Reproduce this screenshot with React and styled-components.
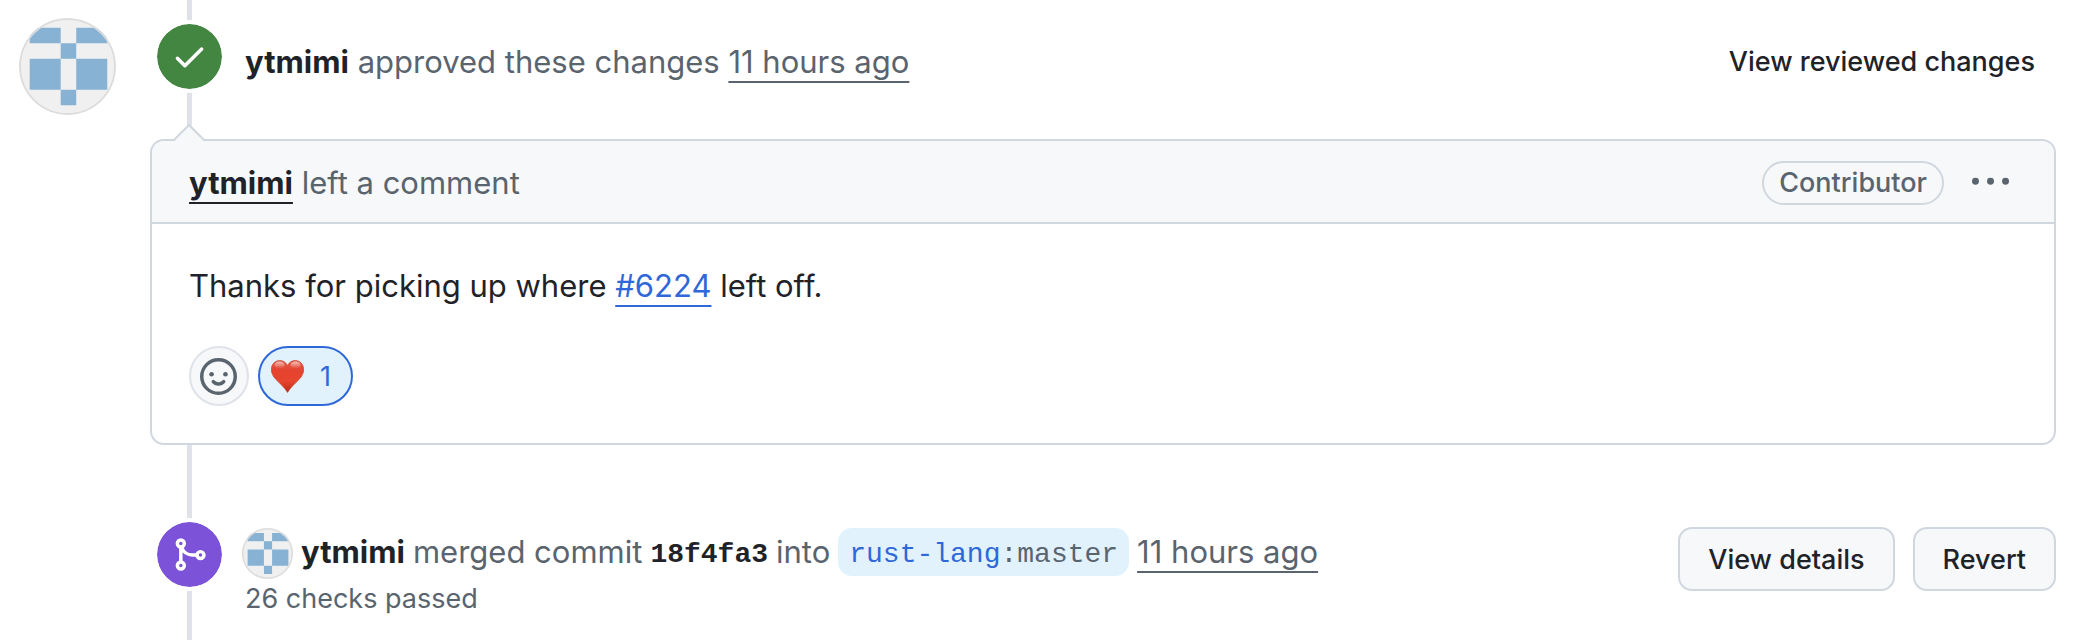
import React from "react";
import styled, { createGlobalStyle, css } from "styled-components";

const color = {
  ink: "#1f2328",
  muted: "#5a646e",
  border: "#d1d7df",
  line: "#dfe3e9",
  subtle: "#f6f8fa",
  accent: "#2f68d8",
  accentSoft: "#e1f2fd",
};

const GlobalStyle = createGlobalStyle`
  *, *::before, *::after { box-sizing: border-box; }
  body {
    margin: 0;
    background: #fff;
    color: ${color.ink};
    font-family: Inter, "Liberation Sans", sans-serif;
    font-size: 31px;
    line-height: 48px;
  }
  button { font-family: inherit; cursor: pointer; }
`;

const Page = styled.main`
  display: flex;
  gap: 34px;
  min-height: 100vh;
  padding: 0 26px 0 19px;
`;

const AvatarLink = styled.a`
  flex: none;
  height: ${(p) => p.$size}px;
  margin-top: ${(p) => (p.$gutter ? 18 : 0)}px;
`;

const AvatarSvg = styled.svg`
  display: block;
  border-radius: 50%;
`;

/* The vertical rail is painted behind every entry. */
const Timeline = styled.div`
  flex: 1;
  min-width: 0;
  background: linear-gradient(${color.line}, ${color.line}) 37px 0 / 5px 100% no-repeat;
`;

const Entry = styled.section`
  display: flex;
  align-items: flex-start;
  gap: 16px;
  padding: ${(p) => p.$padding};
`;

const Badge = styled.span`
  display: flex;
  flex: none;
  align-items: center;
  justify-content: center;
  width: 73px;
  height: 73px;
  border: 4px solid #fff;
  border-radius: 50%;
  background: ${(p) => p.$color} padding-box;
  color: #fff;
`;

const EntryBody = styled.div`
  flex: 1;
  min-width: 0;
  color: ${color.muted};
  padding-top: ${(p) => p.$top}px;
`;

const Summary = styled.div`
  padding: 0 3px;
`;

const Line = styled.div`
  display: flex;
  align-items: flex-start;
  flex-wrap: wrap;
  gap: 8px;
`;

const linkLine = css`
  text-decoration: underline;
  text-decoration-thickness: 2px;
  text-decoration-skip-ink: none;
  text-underline-offset: 8px;
`;

const Author = styled.a`
  color: ${color.ink};
  font-weight: 700;
  text-decoration: none;
  ${(p) => p.$underlined && linkLine}
`;

const TimeLink = styled.a`
  color: ${color.muted};
  ${linkLine}
`;

const IssueLink = styled.a`
  color: ${color.accent};
  ${linkLine}
`;

const Mono = styled.a`
  padding-top: 5px;
  color: ${color.ink};
  font-family: "Liberation Mono", monospace;
  font-size: 28px;
  font-weight: 700;
  line-height: 43px;
  text-decoration: none;
`;

const Branch = styled(Mono)`
  padding: 5px 11px 0;
  border-radius: 14px;
  background: ${color.accentSoft};
  color: ${color.muted};
  font-weight: 400;
`;

const BranchOwner = styled.span`
  color: ${color.accent};
`;

const Checks = styled(Summary)`
  font-size: 27px;
  line-height: 40px;
`;

const PlainButton = styled.button`
  padding: 0 21px;
  border: 0;
  background: none;
  color: ${color.ink};
  font-size: 27px;
  font-weight: 500;
  line-height: 60px;
  margin-top: 12px;
`;

const Actions = styled.div`
  display: flex;
  gap: 18px;
  margin-top: 9px;
`;

const Button = styled.button`
  height: 64px;
  padding: 0 28px;
  border: 2px solid ${color.border};
  border-radius: 14px;
  background: ${color.subtle};
  color: ${color.ink};
  font-size: 27px;
  font-weight: 500;
`;

const Card = styled.article`
  border: 2px solid ${color.border};
  border-radius: 14px;
  background: #fff;
`;

const CardHeader = styled.header`
  position: relative;
  display: flex;
  align-items: center;
  justify-content: space-between;
  height: 83px;
  padding: 3px 45px 0 37px;
  border-bottom: 2px solid ${color.border};
  border-radius: 12px 12px 0 0;
  background: ${color.subtle};
  color: ${color.muted};
`;

const Caret = styled.svg`
  position: absolute;
  left: 18px;
  top: -18px;
`;

const HeaderTools = styled.div`
  display: flex;
  align-items: center;
  gap: 28px;
`;

const Role = styled.span`
  height: 44px;
  padding: 0 15px;
  border: 2px solid ${color.border};
  border-radius: 22px;
  font-size: 27px;
  font-weight: 500;
  line-height: 40px;
`;

const IconButton = styled.button`
  display: flex;
  padding: 0;
  border: 0;
  background: none;
  color: ${color.muted};
`;

const CardBody = styled.div`
  padding: 38px 37px 37px;
`;

const Text = styled.p`
  margin: 0 0 36px;
`;

const Reactions = styled.div`
  display: flex;
  gap: 9px;
`;

const Reaction = styled.button`
  display: flex;
  align-items: center;
  gap: 16px;
  height: 60px;
  width: ${(p) => (p.$active ? 95 : 60)}px;
  padding: 0 0 0 ${(p) => (p.$active ? 11 : 9)}px;
  border: 2px solid ${(p) => (p.$active ? color.accent : color.line)};
  border-radius: 30px;
  background: ${(p) => (p.$active ? color.accentSoft : color.subtle)};
  color: ${(p) => (p.$active ? color.accent : color.muted)};
  font-size: 27px;
`;

function Avatar({ size, gutter }) {
  return (
    <AvatarLink href="#ytmimi" aria-label="ytmimi" $size={size} $gutter={gutter}>
      <AvatarSvg width={size} height={size} viewBox="0 0 100 100">
        <rect width="100" height="100" fill="#f0f0f0" />
        <path
          fill="#87b2d4"
          d="M11 10h32v16H11zM59 10h32v16H59zM43 26h16v16H43zM11 42h32v32H11zM59 42h32v32H59zM43 74h16v16H43z"
        />
        <circle cx="50" cy="50" r="49" fill="none" stroke="#dcdcdc" strokeWidth={size > 60 ? 2 : 4} />
      </AvatarSvg>
    </AvatarLink>
  );
}

const CheckIcon = () => (
  <svg width="37" height="37" viewBox="0 0 16 16" fill="currentColor" aria-hidden="true">
    <path d="M13.78 4.22a.75.75 0 0 1 0 1.06l-7.25 7.25a.75.75 0 0 1-1.06 0L2.22 9.28a.751.751 0 0 1 .018-1.042.751.751 0 0 1 1.042-.018L6 10.94l6.72-6.72a.75.75 0 0 1 1.06 0Z" />
  </svg>
);

const MergeIcon = () => (
  <svg width="37" height="37" viewBox="0 0 16 16" fill="none" stroke="currentColor" strokeWidth="1.5" aria-hidden="true">
    <circle cx="4.25" cy="3.25" r="1.5" />
    <circle cx="4.25" cy="12.75" r="1.5" />
    <circle cx="12.75" cy="8.25" r="1.5" />
    <path d="M4.25 4.75v6.5M4.6 4.9A5 5 0 0 0 9.25 8.25h2" />
  </svg>
);

const SmileyIcon = () => (
  <svg width="37" height="37" viewBox="0 0 16 16" fill="none" stroke="currentColor" strokeWidth="1.5" aria-hidden="true">
    <circle cx="8" cy="8" r="7.25" />
    <circle cx="5" cy="7" r="1" fill="currentColor" stroke="none" />
    <circle cx="11" cy="7" r="1" fill="currentColor" stroke="none" />
    <path d="M5.75 10.25C6.2 10.8 6.95 11.25 8 11.25s1.8-.45 2.25-1" strokeLinecap="round" />
  </svg>
);

const KebabIcon = () => (
  <svg width="37" height="37" viewBox="0 0 16 16" fill="currentColor" aria-hidden="true">
    <circle cx="1.5" cy="7" r="1.5" />
    <circle cx="8" cy="7" r="1.5" />
    <circle cx="14.5" cy="7" r="1.5" />
  </svg>
);

const HeartIcon = () => (
  <svg width="33" height="33" viewBox="0 0 33 33" aria-hidden="true">
    <defs>
      <linearGradient id="heart-fill" x1="0" y1="0" x2="0" y2="1">
        <stop offset="0" stopColor="#e2604e" />
        <stop offset="0.3" stopColor="#e5432f" />
        <stop offset="0.65" stopColor="#e8452f" />
        <stop offset="1" stopColor="#b92814" />
      </linearGradient>
      <linearGradient id="heart-shine" x1="0" y1="0" x2="0" y2="1">
        <stop offset="0" stopColor="#fff" stopOpacity="0.6" />
        <stop offset="1" stopColor="#fff" stopOpacity="0" />
      </linearGradient>
    </defs>
    <path
      fill="url(#heart-fill)"
      stroke="#cf4531"
      strokeWidth="0.8"
      d="M16.5 32.4C14 28 9.5 24 5 19.5 1.8 16.2.4 13 .4 9.5.4 4.3 4 .6 8.7.6c3.8 0 6.5 2 7.8 5.2C17.8 2.6 20.5.6 24.3.6c4.7 0 8.3 3.7 8.3 8.9 0 3.5-1.4 6.7-4.6 10C23.5 24 19 28 16.5 32.4Z"
    />
    <ellipse cx="8.5" cy="5" rx="5" ry="3.5" fill="url(#heart-shine)" />
    <ellipse cx="24.5" cy="5" rx="5" ry="3.5" fill="url(#heart-shine)" />
  </svg>
);

export default function App() {
  return (
    <>
      <GlobalStyle />
      <Page>
        <Avatar size={97} gutter />
        <Timeline>
          <Entry $padding="20px 0 46px 3px">
            <Badge $color="#438642">
              <CheckIcon />
            </Badge>
            <EntryBody $top={18}>
              <Summary>
                <Author href="#ytmimi">ytmimi</Author> approved these changes{" "}
                <TimeLink href="#review">11 hours ago</TimeLink>
              </Summary>
            </EntryBody>
            <PlainButton type="button">View reviewed changes</PlainButton>
          </Entry>

          <Card>
            <CardHeader>
              <Caret width="38" height="22" viewBox="0 0 38 22" aria-hidden="true">
                <path d="M2 18 19 2l17 16v4H2z" fill={color.subtle} />
                <path d="M2 17h2L19 2l15 15h2" fill="none" stroke={color.border} strokeWidth="2" />
              </Caret>
              <span>
                <Author href="#ytmimi" $underlined>
                  ytmimi
                </Author>{" "}
                left a comment
              </span>
              <HeaderTools>
                <Role>Contributor</Role>
                <IconButton type="button" aria-label="Show options">
                  <KebabIcon />
                </IconButton>
              </HeaderTools>
            </CardHeader>
            <CardBody>
              <Text>
                Thanks for picking up where <IssueLink href="#6224">#6224</IssueLink> left off.
              </Text>
              <Reactions>
                <Reaction type="button" aria-label="Add reaction">
                  <SmileyIcon />
                </Reaction>
                <Reaction type="button" aria-label="Heart, 1 reaction" $active>
                  <HeartIcon />
                  <span>1</span>
                </Reaction>
              </Reactions>
            </CardBody>
          </Card>

          <Entry $padding="73px 0 0 3px">
            <Badge $color="#7c52d9">
              <MergeIcon />
            </Badge>
            <EntryBody $top={10}>
              <Line>
                <Avatar size={51} />
                <Author href="#ytmimi">ytmimi</Author>
                <span>merged commit</span>
                <Mono href="#18f4fa3">18f4fa3</Mono>
                <span>into</span>
                <Branch href="#master">
                  <BranchOwner>rust-lang</BranchOwner>:master
                </Branch>
                <TimeLink href="#merge">11 hours ago</TimeLink>
              </Line>
              <Checks>26 checks passed</Checks>
            </EntryBody>
            <Actions>
              <Button type="button">View details</Button>
              <Button type="button">Revert</Button>
            </Actions>
          </Entry>
        </Timeline>
      </Page>
    </>
  );
}
